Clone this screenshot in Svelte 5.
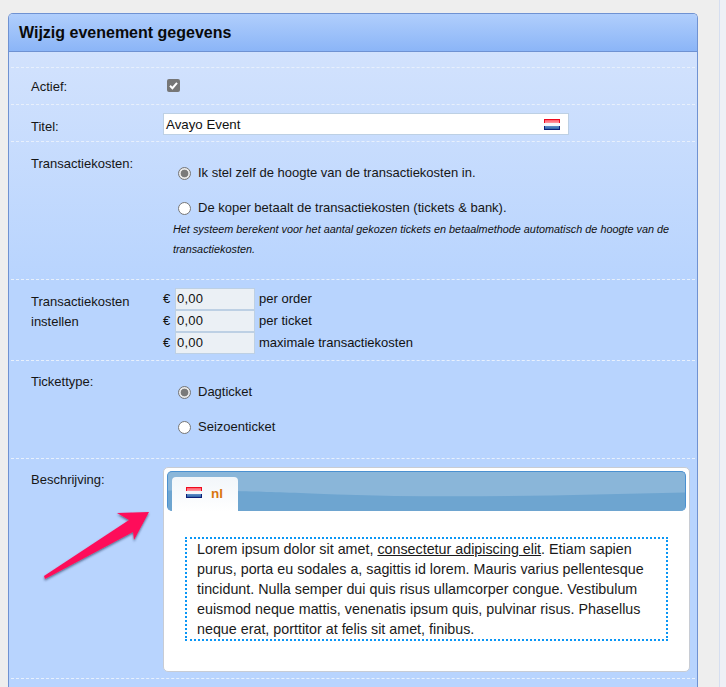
<script>
  const costs = [
    ['0,00', 'per order'],
    ['0,00', 'per ticket'],
    ['0,00', 'maximale transactiekosten']
  ];
</script>

{#snippet flag(cls)}
  <svg class={cls} width="16" height="11" viewBox="0 0 16 11" aria-hidden="true">
    <defs>
      <linearGradient id="r-{cls}" x1="0" y1="0" x2="0" y2="1"><stop offset="0" stop-color="#ff5a68"/><stop offset="1" stop-color="#ff9aa4"/></linearGradient>
      <linearGradient id="b-{cls}" x1="0" y1="0" x2="0" y2="1"><stop offset="0" stop-color="#5f8fc8"/><stop offset="1" stop-color="#2f63a8"/></linearGradient>
    </defs>
    <rect x="0" y="0" width="16" height="4" fill="#ee0a1e"/>
    <rect x="1" y="1" width="14" height="3" fill="url(#r-{cls})"/>
    <rect x="0" y="4" width="16" height="3" fill="#f6f6fa"/>
    <rect x="0" y="7" width="16" height="4" fill="#0c1f78"/>
    <rect x="1" y="7" width="14" height="3" fill="url(#b-{cls})"/>
  </svg>
{/snippet}

<div class="page">
  <div class="sidebar"></div>
  <section class="panel">
    <h1>Wijzig evenement gegevens</h1>
    <div class="body">
      <div class="row r1">
        <div class="label">Actief:</div>
        <div class="checkbox">
          <svg width="13" height="13" viewBox="0 0 13 13" aria-hidden="true">
            <rect width="13" height="13" rx="2" fill="#767676"/>
            <path d="M3 6.8 L5.4 9.2 L10 3.8" fill="none" stroke="#fff" stroke-width="2"/>
          </svg>
        </div>
      </div>

      <div class="row r2">
        <div class="label">Titel:</div>
        <div class="title-input"><span>Avayo Event</span>{@render flag('f1')}</div>
      </div>

      <div class="row r3">
        <div class="label">Transactiekosten:</div>
        <div class="radios">
          <label class="radio first"><i class="dot on"></i>Ik stel zelf de hoogte van de transactiekosten in.</label>
          <label class="radio second"><i class="dot"></i>De koper betaalt de transactiekosten (tickets &amp; bank).</label>
          <p class="note">Het systeem berekent voor het aantal gekozen tickets en betaalmethode automatisch de hoogte van de transactiekosten.</p>
        </div>
      </div>

      <div class="row r4">
        <div class="label">Transactiekosten<br />instellen</div>
        <div class="costs">
          {#each costs as c}
            <div class="cost">
              <span class="euro">€</span>
              <span class="amount">{c[0]}</span>
              <span class="unit">{c[1]}</span>
            </div>
          {/each}
        </div>
      </div>

      <div class="row r5">
        <div class="label">Tickettype:</div>
        <div class="radios">
          <label class="radio first"><i class="dot on"></i>Dagticket</label>
          <label class="radio second t"><i class="dot"></i>Seizoenticket</label>
        </div>
      </div>

      <div class="row r6">
        <div class="label">Beschrijving:</div>
        <div class="editor">
          <div class="tabs">
            <svg class="wave" viewBox="0 0 520 40" preserveAspectRatio="none" aria-hidden="true">
              <path d="M0 19 C70 19 90 20 170 23 C280 27 400 24 520 21 V40 H0 Z" fill="#6ea5d0"/>
            </svg>
            <div class="tab">{@render flag('f2')}<b>nl</b></div>
          </div>
          <div class="content">
            Lorem ipsum dolor sit amet, <u>consectetur adipiscing elit</u>. Etiam sapien purus, porta eu sodales a, sagittis id lorem. Mauris varius pellentesque tincidunt. Nulla semper dui quis risus ullamcorper congue. Vestibulum euismod neque mattis, venenatis ipsum quis, pulvinar risus. Phasellus neque erat, porttitor at felis sit amet, finibus.
          </div>
        </div>
        <svg class="arrow" width="120" height="80" viewBox="0 0 120 80" aria-hidden="true">
          <defs>
            <filter id="ash" x="-20%" y="-20%" width="140%" height="140%">
              <feDropShadow dx="0" dy="1.5" stdDeviation="1.2" flood-color="#1c2a50" flood-opacity="0.65"/>
            </filter>
          </defs>
          <polygon points="1,66 86,10 74,3 106,2 91,30 90,22 2,69" fill="#fe0f5a" filter="url(#ash)"/>
        </svg>
      </div>
      <div class="row r7"></div>
    </div>
  </section>
</div>

<style>
  :global(body) {
    margin: 0;
    background: #eeeeee;
    font-family: "Liberation Sans", Arial, sans-serif;
    color: #111;
    overflow: hidden;
  }
  .page {
    position: relative;
    height: 687px;
    padding: 13px 0 0 8px;
    box-sizing: border-box;
    overflow: hidden;
  }
  .sidebar {
    position: absolute;
    top: 0;
    bottom: 0;
    right: 0;
    width: 6px;
    border-left: 1px solid #d5def0;
    background: #eef0f6;
  }
  .panel {
    width: 690px;
    box-sizing: border-box;
    border: 1px solid #6f92d2;
    border-bottom: 0;
    border-radius: 5px 5px 0 0;
    overflow: hidden;
  }
  h1 {
    margin: 0;
    height: 38px;
    box-sizing: border-box;
    padding: 0 10px;
    line-height: 38px;
    font-size: 16px;
    font-weight: bold;
    color: #0a0a0a;
    background: linear-gradient(#b0cefc, #8bb5f7);
    border-bottom: 1px solid #6f92d2;
  }
  .body {
    background: linear-gradient(#d2e2fd 0, #b8d4fe 230px);
    padding-top: 15px;
    height: 640px;
    box-sizing: border-box;
  }
  .row {
    position: relative;
    display: grid;
    grid-template-columns: 132px 1fr;
    margin: 0 2px;
    padding-left: 20px;
    box-sizing: border-box;
    border-top: 1px dashed #e8f0fc;
    font-size: 13px;
    line-height: 22px;
  }
  .label { color: #161616; }
  .r1 { height: 37px; padding-top: 8px; }
  .r2 { height: 37px; padding-top: 11px; }
  .r3 { height: 138px; padding-top: 11px; }
  .r4 { height: 81px; padding-top: 10px; }
  .r5 { height: 98px; padding-top: 10px; }
  .r6 { height: 220px; padding-top: 10px; }
  .r7 { height: 8px; }
  .r4 .label { line-height: 20px; padding-top: 2px; }
  .r1 .checkbox { padding: 3px 0 0 4px; line-height: 0; }
  .title-input {
    width: 406px;
    height: 22px;
    margin-top: -3px;
    box-sizing: border-box;
    display: flex;
    align-items: center;
    justify-content: space-between;
    padding: 0 8px 0 2px;
    background: #fff;
    border: 1px solid #bdd0e4;
    font-size: 13.3px;
    color: #111;
  }
  .title-input span { margin-top: 2px; }
  .radios { padding-left: 15px; }
  .radio {
    display: flex;
    align-items: center;
    gap: 7px;
    height: 20px;
    color: #161616;
  }
  .r3 .radios { padding-top: 10px; }
  .r3 .second { margin-top: 15px; }
  .r5 .radios { padding-top: 11px; }
  .r5 .second { margin-top: 15px; }
  .dot {
    width: 13px;
    height: 13px;
    box-sizing: border-box;
    border-radius: 50%;
    border: 1px solid #767676;
    background: #fff;
    flex: none;
  }
  .dot.on {
    background: radial-gradient(circle, #7a7a7a 0 3.5px, #e8e8e8 4.2px);
  }
  .note {
    margin: 1px 0 0 -5px;
    font-size: 10.85px;
    font-style: italic;
    line-height: 20px;
    color: #111;
    width: 510px;
  }
  .costs { margin-top: -2px; }
  .cost {
    display: flex;
    align-items: center;
    height: 22px;
  }
  .euro { width: 12px; font-size: 13px; }
  .amount {
    width: 80px;
    height: 22px;
    box-sizing: border-box;
    background: #ebf0f5;
    border: 1px solid #bdd0e4;
    padding-left: 1px;
    font-size: 13px;
    line-height: 19px;
    letter-spacing: 0.2px;
  }
  .unit { margin-left: 4px; }
  .editor {
    width: 527px;
    height: 205px;
    margin-top: -2px;
    box-sizing: border-box;
    padding: 3px 3px 0 3px;
    background: #fff;
    border: 1px solid #c8ccd4;
    border-radius: 5px;
  }
  .tabs {
    position: relative;
    height: 40px;
    box-sizing: border-box;
    border: 1px solid #4a90d0;
    border-bottom: 0;
    border-radius: 5px;
    background: #8ab6d9;
    overflow: hidden;
    padding: 5px 0 0 4px;
  }
  .wave {
    position: absolute;
    inset: 0;
    width: 100%;
    height: 100%;
  }
  .tab {
    position: relative;
    width: 66px;
    height: 35px;
    box-sizing: border-box;
    display: flex;
    align-items: center;
    gap: 9px;
    padding: 0 0 4px 14px;
    background: linear-gradient(#f2f6fa, #fff);
    border-radius: 4px 4px 0 0;
  }
  .tab b {
    color: #d9760f;
    font-size: 13.5px;
    margin-top: 2px;
  }
  .content {
    width: 483px;
    height: 104px;
    margin: 26px 0 0 18px;
    box-sizing: border-box;
    border: 2px dotted #0a96f5;
    padding: 0 10px;
    font-size: 14.3px;
    line-height: 20px;
    color: #1a1a1a;
  }
  .arrow {
    position: absolute;
    left: 32px;
    top: 51px;
    overflow: visible;
  }
</style>
